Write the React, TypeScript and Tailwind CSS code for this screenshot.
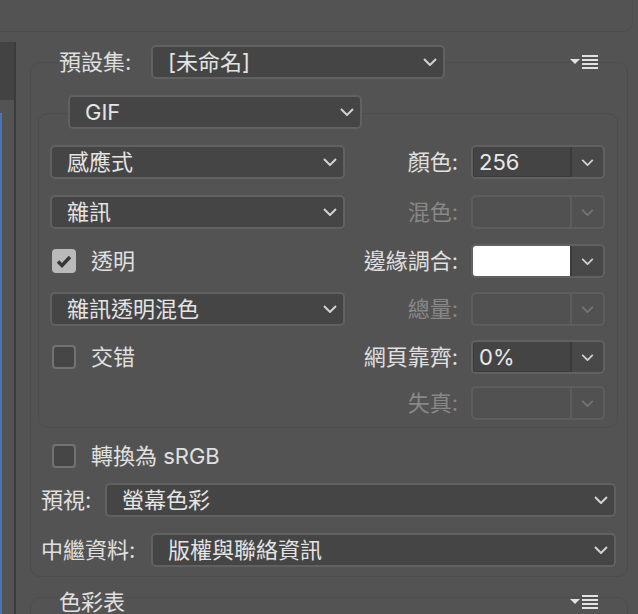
import React from "react";

const font = { fontFamily: 'Inter, "Noto Sans CJK TC", sans-serif' };

function Chevron({ dim = false, small = false }: { dim?: boolean; small?: boolean }) {
  return (
    <svg
      width={small ? 13 : 14}
      height={small ? 7 : 8}
      viewBox="0 0 14 8"
      className={dim ? "text-[#767676]" : "text-[#d2d2d2]"}
    >
      <polyline points="1,1 7,7 13,1" fill="none" stroke="currentColor" strokeWidth="2" />
    </svg>
  );
}

function MenuIcon() {
  return (
    <svg width="28" height="14" viewBox="0 0 28 14" className="text-[#e2e2e2]">
      <polygon points="0,4 10,4 5,9" fill="currentColor" />
      <rect x="12" y="0" width="16" height="2" fill="currentColor" />
      <rect x="12" y="4" width="16" height="2" fill="currentColor" />
      <rect x="12" y="8" width="16" height="2" fill="currentColor" />
      <rect x="12" y="12" width="16" height="2" fill="currentColor" />
    </svg>
  );
}

function Select({ value, className = "" }: { value: string; className?: string }) {
  return (
    <div
      className={`flex h-[34px] items-center rounded-[5px] border-2 border-[#616161] bg-[#454545] pl-[15px] pr-[6px] text-[#e4e4e4] ${className}`}
    >
      <span className="leading-none">{value}</span>
      <span className="ml-auto flex">
        <Chevron />
      </span>
    </div>
  );
}

function Combo({ value, disabled = false, white = false }: { value?: string; disabled?: boolean; white?: boolean }) {
  if (disabled) {
    return (
      <div className="flex h-[34px] w-[134px] rounded-[5px] border-2 border-[#5d5d5d] bg-[#515151]">
        <div className="flex-1" />
        <div className="flex w-[33px] items-center justify-center border-l-2 border-[#5d5d5d]">
          <Chevron dim small />
        </div>
      </div>
    );
  }
  return (
    <div className="flex h-[34px] w-[134px] overflow-hidden rounded-[5px] border-2 border-[#616161]">
      <div
        className={`flex flex-1 items-center pl-[5px] leading-none text-[#e8e8e8] ${
          white ? "bg-white" : "bg-[#444444] border-l border-b border-[#3b3b3b]"
        }`}
      >
        {value}
      </div>
      <div className="flex w-[33px] items-center justify-center border-l-2 border-[#3a3a3a] bg-[#484848]">
        <Chevron small />
      </div>
    </div>
  );
}

function Check({ checked = false }: { checked?: boolean }) {
  if (checked) {
    return (
      <div className="flex h-6 w-6 items-center justify-center rounded-[4px] bg-[#bababa]">
        <svg width="16" height="13" viewBox="0 0 16 13">
          <polyline points="2,6.5 6,10.5 14,2" fill="none" stroke="#363636" strokeWidth="3.4" />
        </svg>
      </div>
    );
  }
  return <div className="h-6 w-6 rounded-[4px] border-2 border-[#727272] bg-[#464646]" />;
}

function Field({ label, disabled = false, children }: { label: string; disabled?: boolean; children: React.ReactNode }) {
  return (
    <div className="flex items-center gap-[13px]">
      <span className={`leading-none ${disabled ? "text-[#888888]" : "text-[#e0e0e0]"}`}>{label}</span>
      {children}
    </div>
  );
}

export default function App() {
  return (
    <div
      className="flex h-[614px] w-[638px] flex-col overflow-hidden bg-[#535353] text-[22px] text-[#e0e0e0]"
      style={font}
    >
      {/* bottom of the previous panel */}
      <div className="mr-[5px] h-[32px] shrink-0 rounded-br-[10px] border-b border-r border-[#4c4c4c]" />

      <div className="flex flex-1">
        {/* left side strip */}
        <div className="mt-[10px] flex w-[16px] shrink-0 flex-col border-r-2 border-[#3c3c3c]">
          <div className="h-[58px] bg-[#434343]" />
          <div className="mt-[13px] w-[2px] flex-1 bg-[#4b74b5]" />
        </div>

        <div className="flex-1 pl-[14px] pr-[10px]">
          {/* optimize panel */}
          <div className="mt-[30px] rounded-[10px] border border-[#4d4d4d] pb-[9px]">
            <div className="-mt-[18px] flex h-[34px] items-center">
              <span className="ml-[28px] w-[92px] bg-[#535353] leading-none">預設集:</span>
              <Select value="[未命名]" className="w-[294px]" />
              <span className="ml-auto mr-[29px] flex">
                <MenuIcon />
              </span>
            </div>

            <div className="ml-[7px] mr-[9px] mt-[34px] rounded-[10px] border border-[#4d4d4d] pb-[7px]">
              <div className="-mt-[19px] ml-[29px] flex">
                <Select value="GIF" className="w-[294px]" />
              </div>

              <div className="ml-[11px] mr-[12px] flex flex-col">
                <div className="mt-[16px] flex items-center justify-between">
                  <Select value="感應式" className="w-[295px]" />
                  <Field label="顏色:">
                    <Combo value="256" />
                  </Field>
                </div>
                <div className="mt-[16px] flex items-center justify-between">
                  <Select value="雜訊" className="w-[295px]" />
                  <Field label="混色:" disabled>
                    <Combo disabled />
                  </Field>
                </div>
                <div className="mt-[15px] flex items-center justify-between">
                  <div className="ml-[2px] flex items-center gap-[15px]">
                    <Check checked />
                    <span className="leading-none">透明</span>
                  </div>
                  <Field label="邊緣調合:">
                    <Combo white />
                  </Field>
                </div>
                <div className="mt-[14px] flex items-center justify-between">
                  <Select value="雜訊透明混色" className="w-[295px]" />
                  <Field label="總量:" disabled>
                    <Combo disabled />
                  </Field>
                </div>
                <div className="mt-[14px] flex items-center justify-between">
                  <div className="ml-[2px] flex items-center gap-[15px]">
                    <Check />
                    <span className="leading-none">交错</span>
                  </div>
                  <Field label="網頁靠齊:">
                    <Combo value="0%" />
                  </Field>
                </div>
                <div className="mt-[12px] flex items-center justify-end">
                  <Field label="失真:" disabled>
                    <Combo disabled />
                  </Field>
                </div>
              </div>
            </div>

            <div className="ml-[21px] mt-[16px] flex items-center gap-[15px]">
              <Check />
              <span className="leading-none">轉換為 sRGB</span>
            </div>

            <div className="ml-[10px] mr-[11px] mt-[15px] flex items-center">
              <span className="w-[64px] shrink-0 leading-none">預視:</span>
              <Select value="螢幕色彩" className="flex-1" />
            </div>
            <div className="ml-[10px] mr-[11px] mt-[16px] flex items-center">
              <span className="w-[110px] shrink-0 leading-none">中繼資料:</span>
              <Select value="版權與聯絡資訊" className="flex-1" />
            </div>
          </div>

          {/* color table panel */}
          <div className="mt-[20px] h-[60px] rounded-[10px] border border-[#4d4d4d]">
            <div className="-mt-[13px] flex h-[34px] items-center">
              <span className="ml-[28px] bg-[#535353] leading-none">色彩表</span>
              <span className="ml-auto mr-[29px] flex">
                <MenuIcon />
              </span>
            </div>
          </div>
        </div>
      </div>
    </div>
  );
}
